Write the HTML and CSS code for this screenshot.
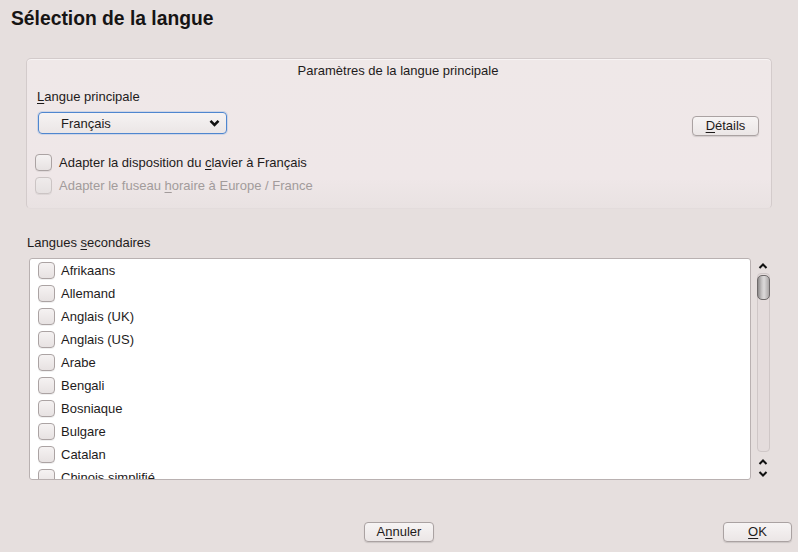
FILE: index.html
```html
<!DOCTYPE html>
<html lang="fr">
<head>
<meta charset="utf-8">
<link rel="stylesheet" href="styles.css">
</head>
<body>
<div class="page">
  <h1 class="title">Sélection de la langue</h1>
  <div class="content">
    <section class="group">
      <div class="group-title">Paramètres de la langue principale</div>
      <div class="label"><u>L</u>angue principale</div>
      <div class="combo-row">
        <div class="combo">
          <span class="combo-text">Français</span>
          <svg class="chev" width="11" height="8" viewBox="0 0 11 8"><polyline points="1.5,1.8 5.5,5.8 9.5,1.8" fill="none" stroke="#111" stroke-width="2.6"/></svg>
        </div>
        <button class="btn btn-details"><u>D</u>étails</button>
      </div>
      <div class="check-row"><span class="cb"></span><span>Adapter la disposition du <u>c</u>lavier à Français</span></div>
      <div class="check-row disabled"><span class="cb"></span><span>Adapter le fuseau <u>h</u>oraire à Europe / France</span></div>
    </section>

    <div class="label sec-label">Langues <u>s</u>econdaires</div>
    <div class="list-row">
      <div class="list">
        <div class="item"><span class="cb"></span><span>Afrikaans</span></div>
        <div class="item"><span class="cb"></span><span>Allemand</span></div>
        <div class="item"><span class="cb"></span><span>Anglais (UK)</span></div>
        <div class="item"><span class="cb"></span><span>Anglais (US)</span></div>
        <div class="item"><span class="cb"></span><span>Arabe</span></div>
        <div class="item"><span class="cb"></span><span>Bengali</span></div>
        <div class="item"><span class="cb"></span><span>Bosniaque</span></div>
        <div class="item"><span class="cb"></span><span>Bulgare</span></div>
        <div class="item"><span class="cb"></span><span>Catalan</span></div>
        <div class="item"><span class="cb"></span><span>Chinois simplifié</span></div>
      </div>
      <div class="scrollbar">
        <svg class="arrow" width="10" height="8" viewBox="0 0 10 8"><polyline points="1.5,6 5,2.5 8.5,6" fill="none" stroke="#111" stroke-width="2"/></svg>
        <div class="track"><div class="handle"></div></div>
        <svg class="arrow a-up2" width="10" height="8" viewBox="0 0 10 8"><polyline points="1.5,6 5,2.5 8.5,6" fill="none" stroke="#111" stroke-width="2"/></svg>
        <svg class="arrow" width="10" height="8" viewBox="0 0 10 8"><polyline points="1.5,2 5,5.5 8.5,2" fill="none" stroke="#111" stroke-width="2"/></svg>
      </div>
    </div>
  </div>
  <div class="footer">
    <span></span>
    <button class="btn btn-cancel">A<u>n</u>nuler</button>
    <button class="btn btn-ok"><u>O</u>K</button>
  </div>
</div>
</body>
</html>
```
FILE: styles.css
```css
* { box-sizing: border-box; }
html, body { margin: 0; padding: 0; }
body {
  width: 798px;
  height: 552px;
  overflow: hidden;
  background: #e6dfde;
  font-family: "Liberation Sans", Arial, sans-serif;
  font-size: 13px;
  color: #1e1b1b;
}
u { text-decoration: underline; text-underline-offset: 2px; }
.title {
  margin: 0;
  padding: 8px 0 0 11px;
  font-size: 19.3px;
  line-height: 22px;
  font-weight: bold;
  color: #161414;
}
.content {
  padding: 0 26px 0 26px;
}
.group {
  margin-top: 28px;
  height: 151px;
  border: 1px solid #d3cbcb;
  border-bottom-color: #e3dcdc;
  border-radius: 5px;
  background: linear-gradient(to bottom, #efe8e8 0%, #efe7e8 80%, #e9e2e2 100%);
  padding: 4px 12px 0 10px;
  box-shadow: inset 0 1px 0 #f8f4f4;
}
.group-title {
  text-align: center;
  line-height: 16px;
  height: 16px;
}
.label {
  line-height: 16px;
  height: 16px;
  margin-top: 10px;
}
.combo-row {
  margin-top: 7px;
  display: flex;
  justify-content: space-between;
  align-items: flex-start;
  height: 24px;
}
.combo {
  margin-left: 1px;
  width: 189px;
  height: 22px;
  border: 1px solid #4f86cf;
  border-radius: 4px;
  background: linear-gradient(to bottom, #f6f3f3, #ebe6e6);
  box-shadow: 0 0 0 1px rgba(110,160,225,0.25);
  display: flex;
  align-items: center;
  padding: 0 6px 0 22px;
}
.combo-text { flex: 1; }
.chev { display: block; }
.btn {
  font-family: "Liberation Sans", Arial, sans-serif;
  font-size: 13px;
  color: #1e1b1b;
  height: 20px;
  padding: 0;
  border: 1px solid #aaa2a2;
  border-radius: 4px;
  background: linear-gradient(to bottom, #f7f4f4, #ebe6e6);
  box-shadow: 0 1px 1px rgba(0,0,0,0.12);
  line-height: 18px;
}
.btn-details {
  width: 67px;
  margin-top: 4px;
}
.check-row {
  display: flex;
  align-items: center;
  height: 23px;
  margin-left: -2px;
  gap: 7px;
}
.combo-row + .check-row { margin-top: 15px; }
.check-row.disabled { color: #a29b9b; }
.cb {
  width: 17px;
  height: 17px;
  flex: none;
  border: 1px solid #aba3a3;
  border-radius: 4px;
  background: linear-gradient(to bottom, #f5f2f2, #e7e2e2);
  box-shadow: 0 1px 0 rgba(0,0,0,0.06);
}
.disabled .cb {
  border-color: #cbc4c4;
  background: linear-gradient(to bottom, #efebeb, #e6e1e1);
}
.sec-label {
  margin-top: 26px;
  margin-left: 1px;
}
.list-row {
  margin-top: 7px;
  display: flex;
  gap: 5px;
  margin-left: 3px;
}
.list {
  width: 722px;
  height: 222px;
  background: #ffffff;
  border: 1px solid #b9b1b1;
  border-radius: 3px;
  overflow: hidden;
}
.item {
  display: flex;
  align-items: center;
  height: 23px;
  padding-left: 8px;
  gap: 6px;
}
.scrollbar {
  width: 14px;
  height: 222px;
  display: flex;
  flex-direction: column;
  align-items: center;
}
.arrow { display: block; flex: none; }
.scrollbar > .arrow:first-child { margin-top: 4px; }
.track {
  margin-top: 3px;
  width: 13px;
  height: 179px;
  border: 1px solid #cfc7c7;
  border-radius: 4px;
  background: #e4dcdc;
  position: relative;
}
.handle {
  position: absolute;
  left: -1px;
  top: 1px;
  width: 13px;
  height: 25px;
  border: 1px solid #6e6a6a;
  border-radius: 5px;
  background: linear-gradient(to right, #8e8b8b 0%, #c9c6c6 35%, #dcdada 55%, #aaa6a6 100%);
}
.a-up2 { margin-top: 6px; }
.scrollbar > .arrow:last-child { margin-top: 4px; }
.footer {
  margin-top: 42px;
  display: grid;
  grid-template-columns: 1fr 70px 1fr;
  align-items: start;
  padding-right: 6px;
}
.btn-cancel { width: 70px; margin-left: 3px; }
.btn-ok { width: 69px; justify-self: end; }
```
